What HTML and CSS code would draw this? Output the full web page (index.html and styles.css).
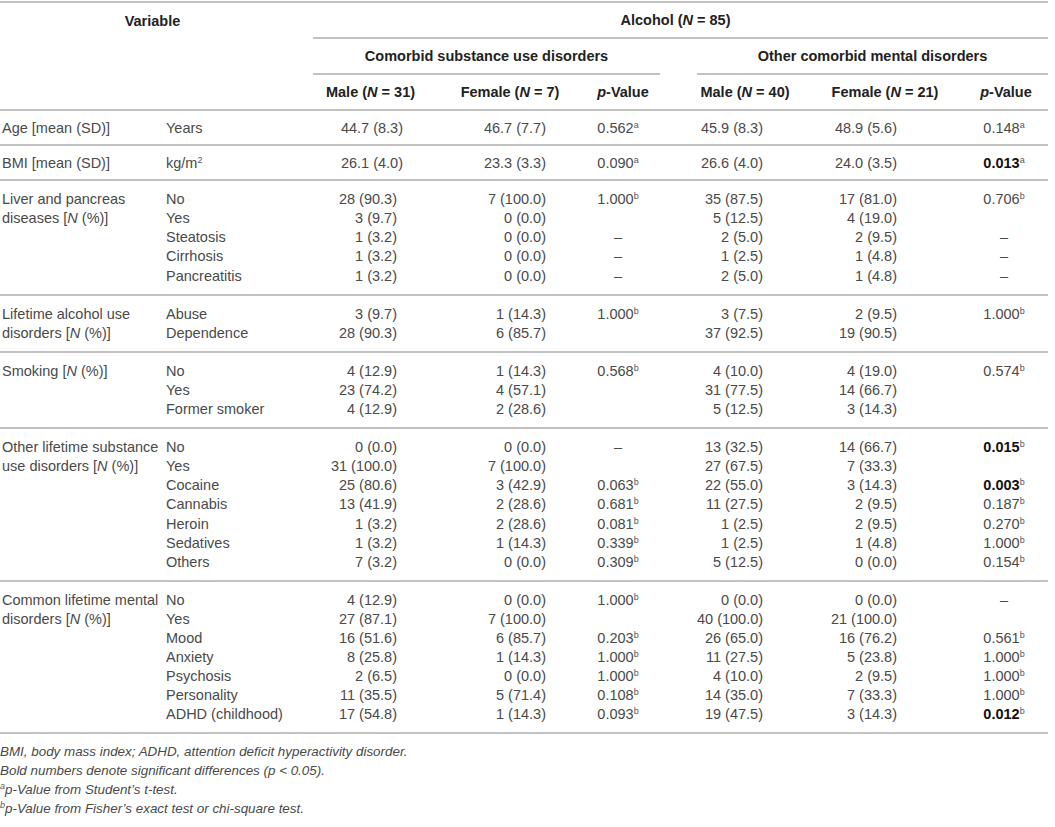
FILE: index.html
```html
<!DOCTYPE html>
<html>
<head>
<meta charset="utf-8">
<link rel="stylesheet" href="styles.css">
</head>
<body>
<table class="tbl">
  <colgroup>
    <col class="w-c1"><col class="w-c2"><col class="w-m1"><col class="w-f1"><col class="w-p1"><col class="w-sp"><col class="w-m2"><col class="w-f2"><col class="w-p2">
  </colgroup>
  <thead>
    <tr class="h1">
      <th colspan="2" class="var">Variable</th>
      <th colspan="7" class="alc">Alcohol (<i>N</i> = 85)</th>
    </tr>
    <tr class="h2">
      <th colspan="2"></th>
      <th colspan="3" class="grp">Comorbid substance use disorders</th>
      <th></th>
      <th colspan="3" class="grp">Other comorbid mental disorders</th>
    </tr>
    <tr class="h3">
      <th colspan="2"></th>
      <th class="hm1">Male (<i>N</i> = 31)</th>
      <th class="hf1">Female (<i>N</i> = 7)</th>
      <th class="hp1"><i>p</i>-Value</th>
      <th></th>
      <th class="hm2">Male (<i>N</i> = 40)</th>
      <th class="hf2">Female (<i>N</i> = 21)</th>
      <th class="hp2"><i>p</i>-Value</th>
    </tr>
  </thead>
  <tbody>
    <tr class="single">
      <td class="c1">Age [mean (SD)]</td><td class="c2">Years</td>
      <td class="m1 mean">44.7 (8.3)</td><td class="f1">46.7 (7.7)</td><td class="p1">0.562<sup>a</sup></td><td></td>
      <td class="m2">45.9 (8.3)</td><td class="f2">48.9 (5.6)</td><td class="p2">0.148<sup>a</sup></td>
    </tr>
    <tr class="single">
      <td class="c1">BMI [mean (SD)]</td><td class="c2">kg/m<sup>2</sup></td>
      <td class="m1 mean">26.1 (4.0)</td><td class="f1">23.3 (3.3)</td><td class="p1">0.090<sup>a</sup></td><td></td>
      <td class="m2">26.6 (4.0)</td><td class="f2">24.0 (3.5)</td><td class="p2"><b>0.013</b><sup>a</sup></td>
    </tr>

    <tr class="first">
      <td class="c1" rowspan="5">Liver and pancreas<br>diseases [<i>N</i> (%)]</td><td class="c2">No</td>
      <td class="m1">28 (90.3)</td><td class="f1">7 (100.0)</td><td class="p1">1.000<sup>b</sup></td><td></td>
      <td class="m2">35 (87.5)</td><td class="f2">17 (81.0)</td><td class="p2">0.706<sup>b</sup></td>
    </tr>
    <tr>
      <td class="c2">Yes</td>
      <td class="m1">3 (9.7)</td><td class="f1">0 (0.0)</td><td class="p1"></td><td></td>
      <td class="m2">5 (12.5)</td><td class="f2">4 (19.0)</td><td class="p2"></td>
    </tr>
    <tr>
      <td class="c2">Steatosis</td>
      <td class="m1">1 (3.2)</td><td class="f1">0 (0.0)</td><td class="p1">–</td><td></td>
      <td class="m2">2 (5.0)</td><td class="f2">2 (9.5)</td><td class="p2">–</td>
    </tr>
    <tr>
      <td class="c2">Cirrhosis</td>
      <td class="m1">1 (3.2)</td><td class="f1">0 (0.0)</td><td class="p1">–</td><td></td>
      <td class="m2">1 (2.5)</td><td class="f2">1 (4.8)</td><td class="p2">–</td>
    </tr>
    <tr class="last">
      <td class="c2">Pancreatitis</td>
      <td class="m1">1 (3.2)</td><td class="f1">0 (0.0)</td><td class="p1">–</td><td></td>
      <td class="m2">2 (5.0)</td><td class="f2">1 (4.8)</td><td class="p2">–</td>
    </tr>

    <tr class="first">
      <td class="c1" rowspan="2">Lifetime alcohol use<br>disorders [<i>N</i> (%)]</td><td class="c2">Abuse</td>
      <td class="m1">3 (9.7)</td><td class="f1">1 (14.3)</td><td class="p1">1.000<sup>b</sup></td><td></td>
      <td class="m2">3 (7.5)</td><td class="f2">2 (9.5)</td><td class="p2">1.000<sup>b</sup></td>
    </tr>
    <tr class="last">
      <td class="c2">Dependence</td>
      <td class="m1">28 (90.3)</td><td class="f1">6 (85.7)</td><td class="p1"></td><td></td>
      <td class="m2">37 (92.5)</td><td class="f2">19 (90.5)</td><td class="p2"></td>
    </tr>

    <tr class="first">
      <td class="c1" rowspan="3">Smoking [<i>N</i> (%)]</td><td class="c2">No</td>
      <td class="m1">4 (12.9)</td><td class="f1">1 (14.3)</td><td class="p1">0.568<sup>b</sup></td><td></td>
      <td class="m2">4 (10.0)</td><td class="f2">4 (19.0)</td><td class="p2">0.574<sup>b</sup></td>
    </tr>
    <tr>
      <td class="c2">Yes</td>
      <td class="m1">23 (74.2)</td><td class="f1">4 (57.1)</td><td class="p1"></td><td></td>
      <td class="m2">31 (77.5)</td><td class="f2">14 (66.7)</td><td class="p2"></td>
    </tr>
    <tr class="last">
      <td class="c2">Former smoker</td>
      <td class="m1">4 (12.9)</td><td class="f1">2 (28.6)</td><td class="p1"></td><td></td>
      <td class="m2">5 (12.5)</td><td class="f2">3 (14.3)</td><td class="p2"></td>
    </tr>

    <tr class="first">
      <td class="c1" rowspan="7">Other lifetime substance<br>use disorders [<i>N</i> (%)]</td><td class="c2">No</td>
      <td class="m1">0 (0.0)</td><td class="f1">0 (0.0)</td><td class="p1">–</td><td></td>
      <td class="m2">13 (32.5)</td><td class="f2">14 (66.7)</td><td class="p2"><b>0.015</b><sup>b</sup></td>
    </tr>
    <tr>
      <td class="c2">Yes</td>
      <td class="m1">31 (100.0)</td><td class="f1">7 (100.0)</td><td class="p1"></td><td></td>
      <td class="m2">27 (67.5)</td><td class="f2">7 (33.3)</td><td class="p2"></td>
    </tr>
    <tr>
      <td class="c2">Cocaine</td>
      <td class="m1">25 (80.6)</td><td class="f1">3 (42.9)</td><td class="p1">0.063<sup>b</sup></td><td></td>
      <td class="m2">22 (55.0)</td><td class="f2">3 (14.3)</td><td class="p2"><b>0.003</b><sup>b</sup></td>
    </tr>
    <tr>
      <td class="c2">Cannabis</td>
      <td class="m1">13 (41.9)</td><td class="f1">2 (28.6)</td><td class="p1">0.681<sup>b</sup></td><td></td>
      <td class="m2">11 (27.5)</td><td class="f2">2 (9.5)</td><td class="p2">0.187<sup>b</sup></td>
    </tr>
    <tr>
      <td class="c2">Heroin</td>
      <td class="m1">1 (3.2)</td><td class="f1">2 (28.6)</td><td class="p1">0.081<sup>b</sup></td><td></td>
      <td class="m2">1 (2.5)</td><td class="f2">2 (9.5)</td><td class="p2">0.270<sup>b</sup></td>
    </tr>
    <tr>
      <td class="c2">Sedatives</td>
      <td class="m1">1 (3.2)</td><td class="f1">1 (14.3)</td><td class="p1">0.339<sup>b</sup></td><td></td>
      <td class="m2">1 (2.5)</td><td class="f2">1 (4.8)</td><td class="p2">1.000<sup>b</sup></td>
    </tr>
    <tr class="last">
      <td class="c2">Others</td>
      <td class="m1">7 (3.2)</td><td class="f1">0 (0.0)</td><td class="p1">0.309<sup>b</sup></td><td></td>
      <td class="m2">5 (12.5)</td><td class="f2">0 (0.0)</td><td class="p2">0.154<sup>b</sup></td>
    </tr>

    <tr class="first">
      <td class="c1" rowspan="7">Common lifetime mental<br>disorders [<i>N</i> (%)]</td><td class="c2">No</td>
      <td class="m1">4 (12.9)</td><td class="f1">0 (0.0)</td><td class="p1">1.000<sup>b</sup></td><td></td>
      <td class="m2">0 (0.0)</td><td class="f2">0 (0.0)</td><td class="p2">–</td>
    </tr>
    <tr>
      <td class="c2">Yes</td>
      <td class="m1">27 (87.1)</td><td class="f1">7 (100.0)</td><td class="p1"></td><td></td>
      <td class="m2">40 (100.0)</td><td class="f2">21 (100.0)</td><td class="p2"></td>
    </tr>
    <tr>
      <td class="c2">Mood</td>
      <td class="m1">16 (51.6)</td><td class="f1">6 (85.7)</td><td class="p1">0.203<sup>b</sup></td><td></td>
      <td class="m2">26 (65.0)</td><td class="f2">16 (76.2)</td><td class="p2">0.561<sup>b</sup></td>
    </tr>
    <tr>
      <td class="c2">Anxiety</td>
      <td class="m1">8 (25.8)</td><td class="f1">1 (14.3)</td><td class="p1">1.000<sup>b</sup></td><td></td>
      <td class="m2">11 (27.5)</td><td class="f2">5 (23.8)</td><td class="p2">1.000<sup>b</sup></td>
    </tr>
    <tr>
      <td class="c2">Psychosis</td>
      <td class="m1">2 (6.5)</td><td class="f1">0 (0.0)</td><td class="p1">1.000<sup>b</sup></td><td></td>
      <td class="m2">4 (10.0)</td><td class="f2">2 (9.5)</td><td class="p2">1.000<sup>b</sup></td>
    </tr>
    <tr>
      <td class="c2">Personality</td>
      <td class="m1">11 (35.5)</td><td class="f1">5 (71.4)</td><td class="p1">0.108<sup>b</sup></td><td></td>
      <td class="m2">14 (35.0)</td><td class="f2">7 (33.3)</td><td class="p2">1.000<sup>b</sup></td>
    </tr>
    <tr class="last">
      <td class="c2">ADHD (childhood)</td>
      <td class="m1">17 (54.8)</td><td class="f1">1 (14.3)</td><td class="p1">0.093<sup>b</sup></td><td></td>
      <td class="m2">19 (47.5)</td><td class="f2">3 (14.3)</td><td class="p2"><b>0.012</b><sup>b</sup></td>
    </tr>
  </tbody>
</table>
<div class="notes">
  <p>BMI, body mass index; ADHD, attention deficit hyperactivity disorder.</p>
  <p>Bold numbers denote significant differences (p &lt; 0.05).</p>
  <p><sup>a</sup>p-Value from Student’s t-test.</p>
  <p><sup>b</sup>p-Value from Fisher’s exact test or chi-square test.</p>
</div>
</body>
</html>
```

FILE: styles.css
```css
html, body {
  margin: 0;
  padding: 0;
  background: #ffffff;
}
body {
  padding-top: 1px;
  font-family: "Liberation Sans", Arial, sans-serif;
  font-size: 14.5px;
  line-height: 19px;
  color: #4a4a4a;
}
.tbl {
  width: 1048px;
  table-layout: fixed;
  border-collapse: collapse;
  border-top: 2px solid #c2c2c2;
  border-bottom: 2px solid #c2c2c2;
}
.w-c1 { width: 160px; }
.w-c2 { width: 153px; }
.w-m1 { width: 127px; }
.w-f1 { width: 140px; }
.w-p1 { width: 80px; }
.w-sp { width: 37px; }
.w-m2 { width: 113px; }
.w-f2 { width: 150px; }
.w-p2 { width: 88px; }

th, td {
  padding: 0;
  white-space: nowrap;
}
th {
  font-weight: bold;
  color: #222222;
  text-align: center;
  padding-top: 8px;
  padding-bottom: 7px;
}
.var { padding-right: 8px; }
.alc { border-bottom: 2px solid #c2c2c2; padding-right: 10px; }
.grp { border-bottom: 2px solid #c2c2c2; }
.h3 th { border-bottom: 2px solid #c2c2c2; }
.hm1 { padding-right: 12px; }
.hp1 { padding-left: 6px; }
.hm2 { padding-right: 17px; }
.hp2 { padding-left: 4px; }

tbody { line-height: 19.1px; }
td { vertical-align: top; }
.c1 { padding-left: 2px; }
.c2 { padding-left: 6px; }
.m1 { text-align: right; padding-right: 43px; }
.m1.mean { padding-right: 37px; }
.f1 { text-align: right; padding-right: 34px; }
.m2 { text-align: right; padding-right: 47px; }
.f2 { text-align: right; padding-right: 63px; }
.p1, .p2 { text-align: center; }
.p1 { padding-right: 4px; }

.single td {
  padding-top: 8px;
  padding-bottom: 6px;
  border-bottom: 2px solid #c2c2c2;
}
.first td { padding-top: 9px; }
.last td {
  padding-bottom: 8px;
  border-bottom: 2px solid #c2c2c2;
}
td[rowspan] { border-bottom: 2px solid #c2c2c2; }
tbody tr:last-child td { border-bottom: none; }

b { color: #111111; }
sup {
  font-size: 9px;
  line-height: 0;
  vertical-align: 5px;
  color: #555555;
}

.notes {
  padding-top: 9px;
  font-style: italic;
  font-size: 13.4px;
  color: #4a4a4a;
}
.notes p {
  margin: 0;
  line-height: 18.7px;
}
.notes sup { font-style: italic; }
```
